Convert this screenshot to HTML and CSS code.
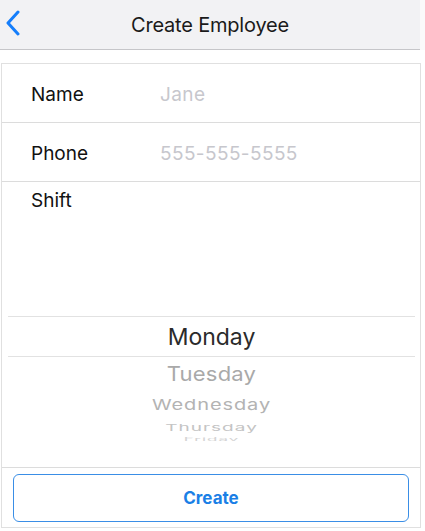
FILE: index.html
```html
<!DOCTYPE html>
<html>
<head>
<meta charset="utf-8">
<link rel="stylesheet" href="styles.css">
</head>
<body>
<header class="nav">
  <svg class="back" width="16" height="26" viewBox="0 0 16 26"><path d="M13 2 L3 13 L13 24" fill="none" stroke="#157efb" stroke-width="3" stroke-linecap="round" stroke-linejoin="round"/></svg>
  <div class="title">Create Employee</div>
</header>
<main class="page">
  <section class="card">
    <div class="row">
      <span class="label">Name</span>
      <span class="placeholder">Jane</span>
    </div>
    <div class="row">
      <span class="label">Phone</span>
      <span class="placeholder">555-555-5555</span>
    </div>
    <div class="shift">
      <div class="shift-label">Shift</div>
      <div class="picker">
        <div class="pick sel">Monday</div>
        <div class="pick p1"><span>Tuesday</span></div>
        <div class="pick p2"><span>Wednesday</span></div>
        <div class="pick p3"><span>Thursday</span></div>
        <div class="pick p4"><span>Friday</span></div>
      </div>
    </div>
    <div class="actions">
      <button class="btn">Create</button>
    </div>
  </section>
</main>
</body>
</html>
```
FILE: styles.css
```css
* { box-sizing: border-box; }
body {
  margin: 0;
  font-family: Inter, "Noto Sans", sans-serif;
  background: #fafafa;
  color: #111;
}
.nav {
  height: 50px;
  background: #f2f2f4;
  border-bottom: 1px solid #c6c6c9;
  display: flex;
  align-items: center;
  justify-content: center;
  width: 420px;
  position: relative;
}
.back {
  position: absolute;
  left: 5px;
  top: 10px;
}
.title {
  font-size: 20px;
  color: #1a1a1a;
  letter-spacing: -0.2px;
}
.page {
  background: #fff;
  padding: 13px 4px 4px 1px;
}
.card {
  width: 420px;
  border: 1px solid #e0e0e0;
  background: #fff;
}
.row {
  height: 59px;
  border-bottom: 1px solid #dcdcdc;
  display: flex;
  align-items: center;
  padding-left: 29px;
  padding-top: 2px;
}
.label {
  width: 129px;
  font-size: 19px;
  color: #111;
}
.placeholder {
  font-size: 19px;
  color: #c7c7cd;
  letter-spacing: 0.4px;
}
.shift {
  height: 286px;
  border-bottom: 1px solid #dcdcdc;
  display: flex;
  flex-direction: column;
}
.shift-label {
  font-size: 19px;
  padding: 7px 0 0 29px;
  height: 134px;
}
.picker {
  margin: 0 5px 0 6px;
  height: 125px;
  overflow: hidden;
  text-align: center;
}
.pick {
  display: flex;
  justify-content: center;
  align-items: center;
}
.sel {
  height: 41px;
  border-top: 1px solid #e2e2e2;
  border-bottom: 1px solid #e2e2e2;
  font-size: 23px;
  color: #2b2b2b;
}
.pick span { display: inline-block; }
.p1 { height: 34px; font-size: 22px; color: #a9a9a9; letter-spacing: 0.2px; }
.p1 span { transform: scaleY(0.9); }
.p2 { height: 28px; font-size: 20px; color: #b3b3b3; letter-spacing: 0.9px; }
.p2 span { transform: scaleY(0.75); }
.p3 { height: 16px; font-size: 19px; color: #c4c4c4; letter-spacing: 1px; }
.p3 span { transform: scaleY(0.5); }
.p4 { height: 8px; font-size: 17px; color: #d4d4d4; letter-spacing: 1px; }
.p4 span { transform: scaleY(0.25); }
.actions {
  height: 59px;
  padding: 6px 11px 5px 11px;
}
.btn {
  width: 100%;
  height: 48px;
  border: 1.5px solid #3a8ee6;
  border-radius: 6px;
  background: #fff;
  font-family: Inter, "Noto Sans", sans-serif;
  font-size: 17px;
  font-weight: 700;
  color: #1a7fe6;
}
```
